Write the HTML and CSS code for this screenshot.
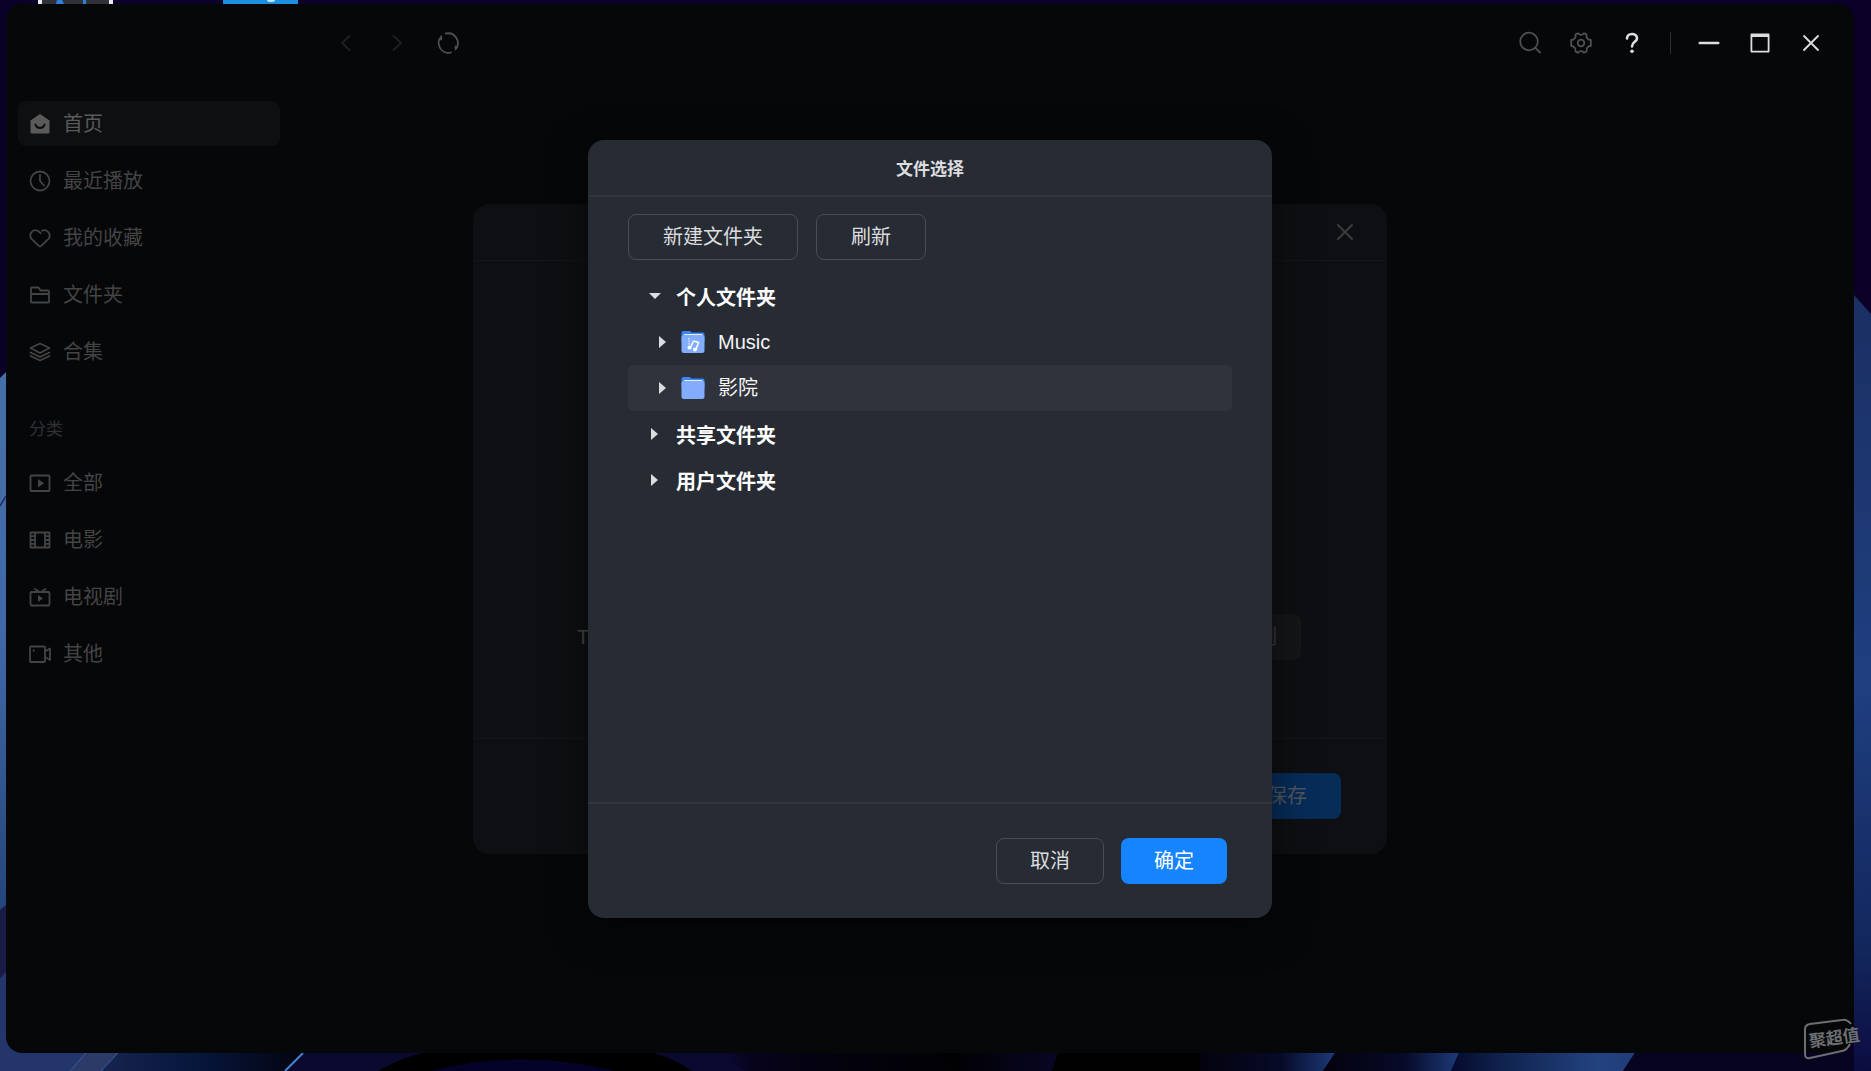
FILE: index.html
```html
<!DOCTYPE html>
<html lang="zh-CN">
<head>
  <meta charset="UTF-8">
  <title>影视 - 文件选择</title>
  <meta name="viewport" content="width=device-width, initial-scale=1">
  <link rel="stylesheet" href="styles.css">
</head>
<body>
  <!-- 桌面壁纸 -->
  <svg class="wallpaper" viewBox="0 0 1871 1071" preserveAspectRatio="none" aria-hidden="true">
    <defs>
      <linearGradient id="leftBlue" x1="0" y1="0" x2="0" y2="1">
        <stop offset="0" stop-color="#4670aa"/>
        <stop offset="0.5" stop-color="#4068a8"/>
        <stop offset="1" stop-color="#24447c"/>
      </linearGradient>
      <linearGradient id="rightBlue" x1="0" y1="0" x2="0" y2="1">
        <stop offset="0" stop-color="#1b2f63"/>
        <stop offset="0.5" stop-color="#1f3f80"/>
        <stop offset="0.85" stop-color="#12265c"/>
        <stop offset="1" stop-color="#0c0c40"/>
      </linearGradient>
      <linearGradient id="navy">
        <stop offset="0" stop-color="#16244f"/>
        <stop offset="0.5" stop-color="#06153a"/>
        <stop offset="1" stop-color="#04040f"/>
      </linearGradient>
      <linearGradient id="floor">
        <stop offset="0" stop-color="#0a0a34"/>
        <stop offset="0.1" stop-color="#07031c"/>
        <stop offset="0.3" stop-color="#04020f"/>
        <stop offset="0.7" stop-color="#010104"/>
        <stop offset="1" stop-color="#090624"/>
      </linearGradient>
      <linearGradient id="ray">
        <stop offset="0" stop-color="#04020e"/>
        <stop offset="0.6" stop-color="#070a28"/>
        <stop offset="1" stop-color="#1c3a78"/>
      </linearGradient>
      <linearGradient id="rayWide">
        <stop offset="0" stop-color="#050a2c"/>
        <stop offset="0.3" stop-color="#102450"/>
        <stop offset="0.8" stop-color="#234380"/>
        <stop offset="1" stop-color="#203c78"/>
      </linearGradient>
    </defs>
    <rect width="1871" height="1071" fill="#0b0028"/>
    <path d="M0 378L12 366V910H0z" fill="url(#leftBlue)"/>
    <path d="M0 506L6 496" stroke="#1c2f66" stroke-width="1.5"/>
    <path d="M0 910L12 900V970L0 980z" fill="#1a1b45"/>
    <path d="M0 978L12 966V1040L86 1053L70 1071H0z" fill="#24356c"/>
    <path d="M12 1040H86V1053L78 1062H12z" fill="#24356c"/>
    <path d="M86 1053H118L101 1071H70z" fill="#2b3a66"/>
    <path d="M118 1053H303L285 1071H101z" fill="url(#navy)"/>
    <path d="M86 1053L70 1071M118 1053L101 1071" stroke="#3c5ea8" fill="none"/>
    <path d="M303 1053H720L745 1071H285z" fill="#0a0a30"/>
    <path d="M303 1053L285 1071" stroke="#4683d0" stroke-width="2"/>
    <path d="M378 1071Q410 1053 440 1050H640Q670 1055 692 1071H614Q520 1048 432 1071z" fill="#000"/>
    <path d="M432 1071Q520 1048 614 1071z" fill="#05022a"/>
    <path d="M720 1053H1058L1052 1071H745z" fill="url(#floor)"/>
    <path d="M1058 1053H1200V1071H1052z" fill="#010102"/>
    <path d="M1200 1053H1335L1323 1071H1200z" fill="url(#ray)"/>
    <path d="M1335 1053H1459L1451 1071H1323z" fill="url(#ray)"/>
    <path d="M1459 1053H1635L1623 1071H1451z" fill="url(#rayWide)"/>
    <path d="M1635 1053H1871V1071H1623z" fill="#060420"/>
    <path d="M1854 295L1871 314V1071H1854z" fill="url(#rightBlue)"/>
    <rect x="38" width="75" height="4" fill="#e8e8ec"/>
    <rect x="42" width="67" height="4" fill="#303238"/>
    <path d="M57 0H62L64 4H56zM83 0H86V4H83z" fill="#2f80d8"/>
    <rect x="223" width="75" height="4" fill="#1c90e0"/>
    <ellipse cx="271" cy="0" rx="4" ry="2" fill="#c8e4f8"/>
  </svg>

  <div class="window">
    <header class="topbar">
      <div class="topbar-group">
        <button class="icon-btn faint" type="button" aria-label="后退">
          <svg width="24" height="24" viewBox="0 0 24 24"><path d="M15.500 5L8 12L15.500 19"/></svg>
        </button>
        <button class="icon-btn faint" type="button" aria-label="前进">
          <svg width="24" height="24" viewBox="0 0 24 24"><path d="M8.500 5L16 12L8.500 19"/></svg>
        </button>
        <button class="icon-btn dim" type="button" aria-label="刷新页面">
          <svg width="24" height="24" viewBox="0 0 24 24"><path d="M10 2.500A9.800 9.800 0 0 1 19.600 18.300V15.500M15 21.500A9.800 9.800 0 0 1 5.200 5.500V8.500"/></svg>
        </button>
      </div>
      <div class="topbar-group">
        <button class="icon-btn dim" type="button" aria-label="搜索">
          <svg width="24" height="24" viewBox="0 0 24 24"><circle cx="11" cy="10.500" r="8.800"/><path d="M17.300 16.800L22 21.500"/></svg>
        </button>
        <button class="icon-btn dim" type="button" aria-label="设置">
          <svg width="24" height="24" viewBox="0 0 24 24"><path d="M9 2.200Q9.800 3.800 12 3.800Q14.200 3.800 15 2.200L17.600 3.600Q17 5.500 18.200 7.200Q19.400 9 21.800 9V15Q19.400 15 18.200 16.800Q17 18.500 17.600 20.400L15 21.800Q14.200 20.200 12 20.200Q9.800 20.200 9 21.800L6.400 20.400Q7 18.500 5.800 16.800Q4.600 15 2.200 15V9Q4.600 9 5.800 7.200Q7 5.500 6.400 3.600z"/><circle cx="12" cy="12" r="3.300"/></svg>
        </button>
        <button class="icon-btn" type="button" aria-label="帮助">
          <svg width="24" height="24" viewBox="0 0 24 24"><path class="thick" d="M7 7.500C7 1.500 17 1.500 17 7.200C17 11 12 10.800 12 15.500"/><circle class="solid" cx="12" cy="20.200" r="1.800"/></svg>
        </button>
        <span class="separator"></span>
        <button class="icon-btn" type="button" aria-label="最小化">
          <svg width="24" height="24" viewBox="0 0 24 24"><path class="thick" d="M2.800 12H21.200"/></svg>
        </button>
        <button class="icon-btn" type="button" aria-label="最大化">
          <svg width="24" height="24" viewBox="0 0 24 24"><path d="M3.400 3.500H20.600V20.600H3.400zM3.400 5H20.600"/></svg>
        </button>
        <button class="icon-btn" type="button" aria-label="关闭">
          <svg width="24" height="24" viewBox="0 0 24 24"><path d="M5 5L19 19M19 5L5 19"/></svg>
        </button>
      </div>
    </header>

    <nav class="sidebar">
      <a class="nav-item active" href="#home">
        <svg width="22" height="22" viewBox="0 0 22 22"><path class="solid" d="M11 1L20.500 7.500V19.500Q20.500 20.500 19.500 20.500H2.500Q1.500 20.500 1.500 19.500V7.500z"/><path class="smile" d="M6.500 11.500Q7.500 15 11 15Q14.500 15 15.500 11.500"/></svg>
        首页
      </a>
      <a class="nav-item" href="#recent">
        <svg width="22" height="22" viewBox="0 0 22 22"><circle cx="11" cy="11" r="9.500"/><path d="M11 5V11L15 15.500"/></svg>
        最近播放
      </a>
      <a class="nav-item" href="#favorites">
        <svg width="22" height="22" viewBox="0 0 22 22"><path d="M11 19.500Q10.300 19.500 9.500 18.700L2.800 12.200C-1 8 3.500 1.300 8.500 3.700Q10 4.500 11.500 6.200M13 3.700C18.500 1.200 23 8 19.200 12.200L12.500 18.700Q11.700 19.500 11 19.500"/></svg>
        我的收藏
      </a>
      <a class="nav-item" href="#folders">
        <svg width="22" height="22" viewBox="0 0 22 22"><path d="M2 17.500V4.500Q2 3.500 3 3.500H9.500L11.500 6.500H19Q20 6.500 20 7.500V17.500Q20 18.500 19 18.500H3Q2 18.500 2 17.500zM2 10H20"/></svg>
        文件夹
      </a>
      <a class="nav-item" href="#collections">
        <svg width="22" height="22" viewBox="0 0 22 22"><path d="M11 2.500L20.500 7L11 12L1.500 7zM1.500 11.500L11 16L20.500 11.500M1.500 15L11 19.500L20.500 15"/></svg>
        合集
      </a>
      <h2 class="nav-title">分类</h2>
      <a class="nav-item" href="#all">
        <svg width="22" height="22" viewBox="0 0 22 22"><rect x="1.500" y="3.500" width="19" height="15.500" rx="1"/><path class="solid" d="M9 7L15 11.200L9 15.500z"/></svg>
        全部
      </a>
      <a class="nav-item" href="#movies">
        <svg width="22" height="22" viewBox="0 0 22 22"><path d="M1.500 3.500H20.500V18.500H1.500zM6 3.500V18.500M16 3.500V18.500M1.500 7.200H6M1.500 11H6M1.500 14.800H6M16 7.200H20.500M16 11H20.500M16 14.800H20.500"/></svg>
        电影
      </a>
      <a class="nav-item" href="#series">
        <svg width="22" height="22" viewBox="0 0 22 22"><rect x="1.500" y="6" width="19" height="13.500" rx="1"/><path d="M6 3L10.500 6M16.500 3L12 6"/><path class="solid" d="M9 9L14 12.500L9 16z"/></svg>
        电视剧
      </a>
      <a class="nav-item" href="#others">
        <svg width="22" height="22" viewBox="0 0 22 22"><rect x="1" y="3.500" width="15" height="15.500" rx="1"/><path d="M16 8.500L21 5.500V17L16 14M4.500 7.500H5"/></svg>
        其他
      </a>
    </nav>

    <!-- 后层设置窗口 -->
    <div class="layer">
      <section class="dialog settings">
        <header class="settings-header">
          <button class="icon-btn" type="button" aria-label="关闭设置">
            <svg width="24" height="24" viewBox="0 0 24 24"><path d="M5 5L19 19M19 5L5 19"/></svg>
          </button>
        </header>
        <div class="settings-body">
          <span>TMDB</span>
          <button class="btn gray" type="button">复制</button>
        </div>
        <footer class="settings-footer">
          <button class="btn save" type="button">保存</button>
        </footer>
      </section>
    </div>

    <!-- 文件选择窗口 -->
    <div class="layer">
      <section class="dialog picker" role="dialog" aria-labelledby="pickerTitle">
        <h1 class="picker-title" id="pickerTitle">文件选择</h1>
        <div class="picker-body">
          <div class="toolbar">
            <button class="btn" type="button">新建文件夹</button>
            <button class="btn" type="button">刷新</button>
          </div>
          <ul class="tree">
            <li class="node root open">
              <svg class="arrow" width="12" height="12" viewBox="0 0 12 12"><path d="M0 3H12L6 9z"/></svg>
              个人文件夹
            </li>
            <li class="node">
              <svg class="arrow" width="12" height="12" viewBox="0 0 12 12"><path d="M2 0L9 6L2 12z"/></svg>
              <svg class="folder" width="24" height="24" viewBox="0 0 24 24">
                <path d="M.5 3Q.5 1 2.500 1H8.500Q9.500 1 10.500 2.500H22Q23.500 2.500 23.500 4.500V12H.5z" fill="#3d85f7"/>
                <path d="M2.500 6Q2.500 4 4 4H20.500Q22 4 22 6z" fill="#e4eeff"/>
                <rect x=".5" y="5" width="23" height="18" rx="2.500" fill="#82adff"/>
                <path d="M12.500 11L17.500 12.500L15 19.500M12.500 11L9.500 17.500" stroke="#fff" stroke-width="1.500" fill="none"/>
                <circle cx="8.500" cy="17.500" r="2" fill="#fff"/><circle cx="14" cy="19.500" r="2" fill="#fff"/>
                <path d="M8 8V15" stroke="#fff" stroke-dasharray="1.500 1"/>
              </svg>
              Music
            </li>
            <li class="node selected">
              <svg class="arrow" width="12" height="12" viewBox="0 0 12 12"><path d="M2 0L9 6L2 12z"/></svg>
              <svg class="folder" width="24" height="24" viewBox="0 0 24 24">
                <path d="M.5 3Q.5 1 2.500 1H8.500Q9.500 1 10.500 2.500H22Q23.500 2.500 23.500 4.500V12H.5z" fill="#3d85f7"/>
                <path d="M2.500 6Q2.500 4 4 4H20.500Q22 4 22 6z" fill="#e4eeff"/>
                <rect x=".5" y="5" width="23" height="18" rx="2.500" fill="#82adff"/>
              </svg>
              影院
            </li>
            <li class="node root">
              <svg class="arrow" width="12" height="12" viewBox="0 0 12 12"><path d="M2 0L9 6L2 12z"/></svg>
              共享文件夹
            </li>
            <li class="node root">
              <svg class="arrow" width="12" height="12" viewBox="0 0 12 12"><path d="M2 0L9 6L2 12z"/></svg>
              用户文件夹
            </li>
          </ul>
        </div>
        <footer class="picker-footer">
          <button class="btn" type="button">取消</button>
          <button class="btn primary" type="button">确定</button>
        </footer>
      </section>
    </div>
  </div>

  <div class="watermark">
    <svg width="52" height="42" viewBox="0 0 52 42" aria-hidden="true"><path d="M47 6Q43 1 38 2L6 6Q1 7 1 11V36Q1 41 6 40L38 33Q43 32 46 26"/></svg>
    <span>聚超值</span>
  </div>
</body>
</html>
```
FILE: styles.css
```css
* {
  box-sizing: border-box;
}
body {
  margin: 0;
  padding: 4px 17px 18px 6px;
  height: 100vh;
  display: flex;
  overflow: hidden;
  background: #0b0028;
  font-family: "Liberation Sans", "Noto Sans CJK SC", sans-serif;
  font-size: 20px;
  line-height: 30px;
}
.wallpaper {
  position: absolute;
  top: 0;
  left: 0;
  width: 100%;
  height: 100%;
}
.window {
  position: relative;
  flex: 1;
  border-radius: 16px;
  overflow: hidden;
  background: #060709;
  color: #444;
}
button {
  font: inherit;
  cursor: pointer;
}

/* 顶栏 */
.topbar {
  display: flex;
  justify-content: space-between;
  padding: 24px 28px 0 325px;
}
.topbar-group {
  display: flex;
  align-items: center;
  gap: 21px;
}
.icon-btn {
  display: flex;
  width: 30px;
  height: 30px;
  padding: 3px;
  border: 0;
  background: none;
  color: #dedede;
}
.icon-btn.dim {
  color: #505050;
}
.icon-btn.faint {
  color: #1f2022;
}
.separator {
  width: 1px;
  height: 22px;
  margin: 0 2px;
  background: #2e2f31;
}
svg {
  flex: none;
}
.icon-btn svg,
.nav-item svg {
  fill: none;
  stroke: currentColor;
  stroke-width: 1.8;
  stroke-linecap: round;
  stroke-linejoin: round;
}
.icon-btn .thick {
  stroke-width: 2.6;
}
.icon-btn .solid,
.nav-item .solid {
  fill: currentColor;
  stroke: none;
}

/* 侧边栏 */
.sidebar {
  display: flex;
  flex-direction: column;
  gap: 12px;
  width: 274px;
  padding: 43px 0 0 12px;
}
.nav-item {
  display: flex;
  align-items: center;
  gap: 12px;
  height: 45px;
  padding-left: 11px;
  border-radius: 8px;
  color: #444;
  text-decoration: none;
}
.nav-item.active {
  background: #0e0f11;
  color: #5a5a5a;
}
.nav-item .smile {
  stroke: #0e0f11;
  stroke-width: 2;
}
.nav-title {
  height: 30px;
  margin: 29px 0 3px;
  padding-left: 11px;
  font-size: 17px;
  font-weight: normal;
  color: #303031;
}

/* 弹窗 */
.layer {
  position: absolute;
  inset: 0;
  display: flex;
  align-items: center;
  justify-content: center;
}
.dialog {
  display: flex;
  flex-direction: column;
  border-radius: 16px;
  overflow: hidden;
}
.btn {
  height: 46px;
  padding: 0 34px;
  border: 1px solid #4a4d54;
  border-radius: 8px;
  background: none;
  color: #dcdddf;
}
.settings {
  width: 914px;
  height: 650px;
  background: #0e0f12;
}
.settings-header {
  display: flex;
  justify-content: flex-end;
  height: 57px;
  padding: 13px 27px;
  border-bottom: 1px solid #141518;
}
.settings-header .icon-btn {
  color: #3c3d3e;
}
.settings-body {
  flex: 1;
  display: flex;
  align-items: flex-end;
  justify-content: space-between;
  padding: 0 86px 78px 104px;
}
.settings-body span {
  line-height: 46px;
}
.btn.gray {
  padding: 0 24px;
  border: 0;
  background: #151618;
  color: #38393a;
}
.settings-footer {
  display: flex;
  justify-content: flex-end;
  height: 116px;
  padding: 34px 46px;
  border-top: 1px solid #141518;
}
.btn.save {
  border: 0;
  background: #062c58;
  color: #50565e;
}
.picker {
  width: 684px;
  height: 778px;
  background: #272b34;
  box-shadow: 0 10px 40px rgba(0, 0, 0, 0.5);
}
.picker-title {
  height: 57px;
  margin: 0;
  border-bottom: 2px solid #30343d;
  font-size: 17px;
  line-height: 60px;
  text-align: center;
  color: #dcdddf;
}
.picker-body {
  flex: 1;
  padding: 17px 40px 0;
}
.toolbar {
  display: flex;
  gap: 18px;
}
.tree {
  margin: 13px 0 0;
  padding: 0;
  list-style: none;
  color: #f4f4f5;
}
.node {
  display: flex;
  align-items: center;
  height: 46px;
  padding-left: 29px;
  border-radius: 6px;
}
.node.root {
  padding: 4px 0 0 21px;
  font-weight: bold;
  color: #fff;
}
.node.selected {
  background: #2f333c;
}
.arrow {
  margin-right: 12px;
  fill: #dcdddf;
}
.root .arrow {
  margin: 0 15px 4px 0;
}
.folder {
  margin-right: 13px;
}
.picker-footer {
  display: flex;
  justify-content: flex-end;
  gap: 17px;
  height: 116px;
  padding: 34px 45px;
  border-top: 2px solid #31353e;
}
.picker-footer .btn {
  padding: 0 33px;
}
.btn.primary {
  border: 0;
  background: #1684ff;
  color: #fff;
}

/* 水印 */
.watermark {
  position: absolute;
  right: 12px;
  bottom: 11px;
  width: 55px;
  height: 42px;
  color: #6c6e72;
}
.watermark svg {
  fill: none;
  stroke: currentColor;
  stroke-width: 2;
}
.watermark span {
  position: absolute;
  top: 6px;
  left: 5px;
  font-size: 17px;
  font-weight: bold;
  transform: rotate(-8deg);
  white-space: nowrap;
}
```
